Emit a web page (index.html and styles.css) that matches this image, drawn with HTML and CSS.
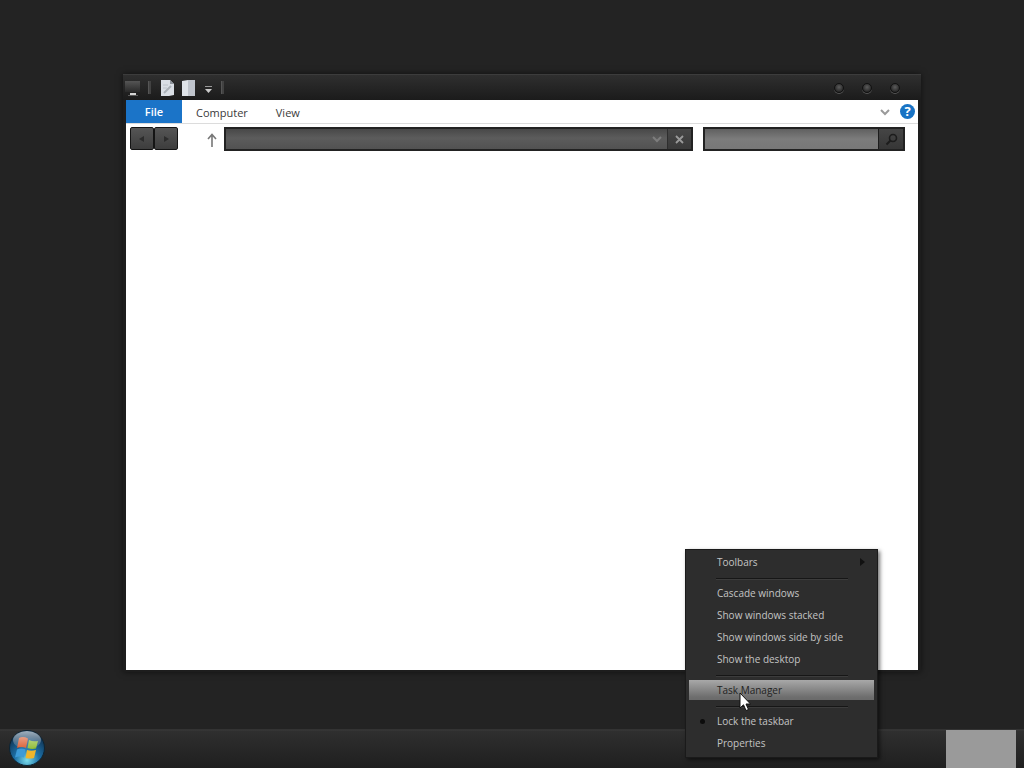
FILE: index.html
```html
<!DOCTYPE html>
<html lang="en">
<head>
<meta charset="utf-8">
<title>Desktop</title>
<link rel="stylesheet" href="styles.css">
</head>
<body>
<main class="desktop">
  <section class="window">
    <header class="titlebar">
      <svg class="qa-computer" width="18" height="16" viewBox="0 0 18 16"><defs><linearGradient id="mon" x1="0" y1="0" x2="0" y2="1"><stop offset="0" stop-color="#555"/><stop offset="1" stop-color="#2a2a2a"/></linearGradient></defs><rect x="0" y="0" width="15" height="11" fill="url(#mon)"/><rect x="5" y="12" width="6" height="2" fill="#d5d5d5"/><rect x="3" y="14" width="10" height="1" fill="#5a5a5a"/></svg>
      <span class="qa-sep qa-sep-first"></span>
      <svg class="qa-icon" width="15" height="16" viewBox="0 0 15 16"><path d="M1 0H10L14 4V15L9 16H1Z" fill="#d9dee5"/><path d="M10 0L10 4H14Z" fill="#8d939b"/><path d="M4 13L11 6" stroke="#aab0b8" stroke-width="2"/><path d="M3 5H8M3 8H7" stroke="#bcc2ca"/></svg>
      <svg class="qa-icon qa-icon-second" width="13" height="16" viewBox="0 0 13 16"><path d="M0 1L6 0V16H0Z" fill="#dfe3e9"/><path d="M6 0H13V16H6Z" fill="#bfc4cc"/></svg>
      <svg class="qa-drop" width="9" height="9" viewBox="0 0 9 9"><rect x="1" y="1" width="7" height="1" fill="#999"/><path d="M1 4H8L4.500 8Z" fill="#ccc"/></svg>
      <span class="qa-sep"></span>
      <div class="caption">
        <span class="dot"></span><span class="dot"></span><span class="dot"></span>
      </div>
    </header>
    <div class="client">
      <nav class="ribbon">
        <span class="tab-file">File</span>
        <span class="tab tab-computer">Computer</span>
        <span class="tab">View</span>
        <svg class="chev" width="10" height="7" viewBox="0 0 10 7"><path d="M1 1L5 5L9 1" fill="none" stroke="#9a9a9a" stroke-width="2"/></svg>
        <span class="help">?</span>
      </nav>
      <div class="addressrow">
        <div class="navbtns">
          <span class="navbtn"><svg width="8" height="8" viewBox="0 0 8 8"><path d="M6 1V7L1 4Z" fill="#2c2c2c"/></svg></span>
          <span class="navbtn"><svg width="8" height="8" viewBox="0 0 8 8"><path d="M2 1V7L7 4Z" fill="#2c2c2c"/></svg></span>
        </div>
        <svg class="up" width="10" height="14" viewBox="0 0 10 14"><path d="M5 14V2M1 6L5 1.500L9 6" fill="none" stroke="#777" stroke-width="1.600"/></svg>
        <div class="address">
          <span class="address-field"><svg width="10" height="7" viewBox="0 0 10 7"><path d="M1 1L5 5L9 1" fill="none" stroke="#7d7d7d" stroke-width="2"/></svg></span>
          <span class="address-x"><svg width="9" height="9" viewBox="0 0 9 9"><path d="M1 1L8 8M8 1L1 8" stroke="#9a9a9a" stroke-width="1.800"/></svg></span>
        </div>
        <div class="search">
          <span class="search-field"></span>
          <span class="search-btn"><svg width="13" height="13" viewBox="0 0 13 13"><circle cx="8" cy="5" r="3.500" fill="none" stroke="#1c1c1c" stroke-width="1.600"/><path d="M5.500 7.500L1.500 11.500" stroke="#1c1c1c" stroke-width="2"/></svg></span>
        </div>
      </div>
    </div>
  </section>

  <footer class="taskbar">
    <svg class="orb" width="36" height="36" viewBox="0 0 36 36">
      <defs>
        <radialGradient id="orbfill" cx="50%" cy="85%" r="70%"><stop offset="0" stop-color="#7adcea"/><stop offset="0.5" stop-color="#1c6fa6"/><stop offset="1" stop-color="#123a5c"/></radialGradient>
        <linearGradient id="orbgloss" x1="0" y1="0" x2="0" y2="1"><stop offset="0" stop-color="#fff" stop-opacity="0.6"/><stop offset="1" stop-color="#fff" stop-opacity="0.05"/></linearGradient>
      </defs>
      <circle cx="18" cy="18" r="17.500" fill="url(#orbfill)" stroke="#0d2433"/>
      <path d="M10 8Q14 6 19 8.500L17 18Q13 16 8 18Z" fill="#d8592c"/>
      <path d="M20 10Q24 12 29 11L27 18.500Q23 19.500 18.500 18Z" fill="#8dbb32"/>
      <path d="M8 19.500Q12 17.500 16.500 19.500L15 27.500Q11 25.500 6 27.500Z" fill="#3d9bd8"/>
      <path d="M18 20Q22 21.500 27 20L25 28Q21 29 16.500 28Z" fill="#efb52b"/>
      <ellipse cx="18" cy="10" rx="14" ry="9" fill="url(#orbgloss)"/>
    </svg>
    <span class="tray-block"></span>
  </footer>

  <div class="menu">
    <div class="item"><span class="label">Toolbars</span><svg class="arrow" width="5" height="8" viewBox="0 0 5 8"><path d="M0 0L5 4L0 8Z" fill="#111"/></svg></div>
    <div class="sep"></div>
    <div class="item"><span class="label">Cascade windows</span></div>
    <div class="item"><span class="label">Show windows stacked</span></div>
    <div class="item"><span class="label">Show windows side by side</span></div>
    <div class="item"><span class="label">Show the desktop</span></div>
    <div class="sep"></div>
    <div class="item item-active"><span class="label">Task Manager</span></div>
    <div class="sep"></div>
    <div class="item"><span class="bullet"></span><span class="label">Lock the taskbar</span></div>
    <div class="item"><span class="label">Properties</span></div>
  </div>

  <svg class="cursor" width="13" height="20" viewBox="0 0 13 20"><path d="M1 1V16L4.500 12.800L7 18.500L9.500 17.500L7 12H11.500Z" fill="#fff" stroke="#111" stroke-width="1"/></svg>
</main>
</body>
</html>
```
FILE: styles.css
```css
* { box-sizing: border-box; }
html, body { margin: 0; height: 100%; }
body { font-family: "Open Sans", "Noto Sans", "Liberation Sans", sans-serif; overflow: hidden; }

.desktop { position: relative; width: 1024px; height: 768px; background: #232323; overflow: hidden; }

.window {
  position: absolute; left: 123px; top: 74px; width: 798px; height: 598px;
  display: flex; flex-direction: column;
  background: #1d1d1d; border-top: 1px solid #3c3c3c;
  box-shadow: 0 0 6px rgba(0,0,0,.55);
  padding: 0 3px 2px;
}

.titlebar {
  flex: 0 0 25px; display: flex; align-items: center;
  margin: 0 -3px; padding-left: 3px;
  background: linear-gradient(#2f2f2f, #1b1b1b);
}
.qa-computer { margin: 3px 0 0 -1px; }
.qa-sep { width: 3px; height: 13px; margin-left: 4px; background: #424242; border-left: 1px solid #555; }
.qa-sep-first { margin-left: 5px; }
.qa-icon { margin-left: 9px; }
.qa-icon-second { margin-left: 7px; }
.qa-drop { margin: 3px 0 0 9px; }
.qa-drop + .qa-sep { margin-left: 8px; }

.caption { margin-left: auto; display: flex; gap: 18px; padding-right: 21px; }
.dot {
  width: 10px; height: 10px; border-radius: 50%;
  background: radial-gradient(circle at 50% 40%, #5c5c5c, #2a2a2a 70%);
  border: 1px solid #111; box-shadow: 0 1px 0 #555;
}

.client { flex: 1; background: #fff; }

.ribbon {
  height: 24px; display: flex; align-items: center;
  border-bottom: 1px solid #dcdcdc; padding-right: 3px;
}
.tab-file {
  width: 56px; height: 23px; background: #1b74c8; color: #fff;
  font-size: 11px; font-weight: 600; line-height: 23px; text-align: center;
}
.tab { font-size: 11px; color: #3a3a3a; margin-top: 2px; margin-left: 28px; }
.tab-computer { margin-left: 14px; }
.chev { margin-left: auto; margin-top: 1px; }
.help {
  width: 15px; height: 15px; margin-left: 10px; border-radius: 50%;
  background: #1873c4; color: #fff; font-size: 13px; font-weight: 700;
  line-height: 15px; text-align: center;
}

.addressrow { display: flex; align-items: flex-start; padding: 3px 0 0 4px; }
.navbtns { display: flex; }
.navbtn {
  width: 24px; height: 23px; display: flex; align-items: center; justify-content: center;
  background: linear-gradient(#555, #3d3d3d); border: 1px solid #141414; border-radius: 2px;
}
.up { margin: 6px 0 0 29px; }
.address {
  margin-left: 7px; width: 469px; height: 24px; display: flex;
  background: #222; padding: 2px;
}
.address-field {
  flex: 1; display: flex; align-items: center; justify-content: flex-end; padding-right: 5px;
  background: linear-gradient(#484848, #5c5c5c 45%, #525252);
}
.address-x {
  width: 24px; display: flex; align-items: center; justify-content: center;
  background: linear-gradient(#474747, #3a3a3a); border-left: 1px solid #2e2e2e;
}
.search {
  margin-left: 10px; width: 202px; height: 24px; display: flex; background: #222; padding: 2px;
}
.search-field { flex: 1; background: linear-gradient(#606060, #7c7c7c 50%, #787878); }
.search-btn {
  width: 25px; display: flex; align-items: center; justify-content: center;
  background: linear-gradient(#454545, #363636); border-left: 1px solid #1c1c1c;
}

.taskbar {
  position: absolute; left: 0; right: 0; bottom: 0; height: 39px;
  display: flex; align-items: flex-start; justify-content: space-between;
  background: linear-gradient(#3a3a3a 0, #2f2f2f 1px, #1f1f1f 100%);
  border-top: 1px solid #333;
}
.orb { margin: 0 0 0 9px; }
.tray-block { width: 70px; height: 39px; margin-right: 8px; background: #9a9a9a; }

.menu {
  position: absolute; left: 685px; top: 549px; width: 193px; height: 209px;
  display: flex; flex-direction: column;
  background: #2d2d2d; border: 1px solid #1a1a1a;
  box-shadow: 2px 2px 4px rgba(0,0,0,.55);
  padding: 1px 3px;
}
.item {
  position: relative; flex: none; height: 22px; padding-left: 28px;
  display: flex; align-items: center; font-size: 10px; color: #c4c4c4;
}
.arrow { position: absolute; right: 9px; top: 7px; }
.sep { flex: none; height: 1px; margin: 5px 26px 3px 27px; background: #161616; box-shadow: 0 1px 0 #3c3c3c; }
.item-active {
  height: 20px; margin: 1px 0; color: #222;
  background: linear-gradient(#a8a8a8, #6e6e6e 85%, #6a6a6a);
}
.bullet { position: absolute; left: 11px; top: 9px; width: 5px; height: 5px; border-radius: 50%; background: #0c0c0c; }

.cursor { position: absolute; left: 739px; top: 692px; }
```
